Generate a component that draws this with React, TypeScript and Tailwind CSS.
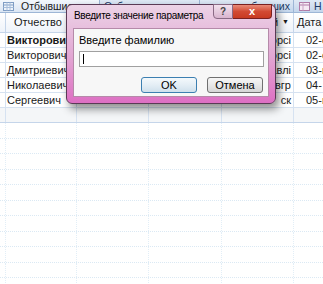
import React from "react";

const cols = ["w-[72px]", "w-[72px]", "w-[73px]", "w-[72px]", "w-[29px]"];

const rows = [
  { name: "Викторович", c4: "орсі", date: "02-о", bold: true },
  { name: "Викторович", c4: "орсі", date: "02-о", bold: false },
  { name: "Дмитриевич", c4: "авлі", date: "03-м", bold: false },
  { name: "Николаевич", c4: "вгр", date: "04-", bold: false },
  { name: "Сергеевич", c4: "ск", date: "05-м", bold: false },
];

const TabIcon = () => (
  <svg width="11" height="9" viewBox="0 0 11 9" className="shrink-0">
    <rect x="0.5" y="0.5" width="10" height="8" fill="#eef4fb" stroke="#7f9dc4" />
    <line x1="0.5" y1="3" x2="10.5" y2="3" stroke="#7f9dc4" />
    <line x1="0.5" y1="5.5" x2="10.5" y2="5.5" stroke="#a8bedb" />
    <line x1="4" y1="0.5" x2="4" y2="8.5" stroke="#a8bedb" />
    <line x1="7" y1="0.5" x2="7" y2="8.5" stroke="#a8bedb" />
  </svg>
);

const TabIconPink = () => (
  <svg width="11" height="9" viewBox="0 0 11 9" className="shrink-0">
    <rect x="0.5" y="0.5" width="10" height="8" fill="#f6eaf4" stroke="#b07ca8" />
    <line x1="0.5" y1="3" x2="10.5" y2="3" stroke="#b07ca8" />
    <line x1="4" y1="0.5" x2="4" y2="8.5" stroke="#c9a4c4" />
  </svg>
);

export default function App() {
  return (
    <div className="relative w-[323px] h-[284px] overflow-hidden bg-white text-[11px] text-[#1a1a1a] font-['Liberation_Sans',Arial,sans-serif]">
      {/* document tabs */}
      <div className="flex h-[13px] overflow-hidden bg-gradient-to-b from-[#dfe9f5] to-[#c4d6ec] border-b border-[#9db6d6]">
        <div className="flex shrink-0 items-center gap-[7px] pl-[3px] w-[100px] overflow-hidden bg-gradient-to-b from-[#f3f7fc] to-[#dbe6f4] border-r border-[#9db6d6]">
          <TabIcon />
          <span className="text-[10.5px] leading-none whitespace-nowrap">Отбывшие сро</span>
        </div>
        <div className="flex shrink-0 items-center pl-[4px] w-[100px] overflow-hidden border-r border-[#9db6d6]">
          <span className="text-[10.5px] leading-none whitespace-nowrap text-[#1c3a66]">Отбывшие срок</span>
        </div>
        <div className="flex shrink-0 items-center justify-end pr-[3px] w-[94px] overflow-hidden border-r border-[#9db6d6]">
          <span className="text-[10.5px] leading-none whitespace-nowrap text-[#1c3a66]">отбывших</span>
        </div>
        <div className="flex shrink-0 items-center gap-[4px] pl-[5px]">
          <TabIconPink />
          <span className="text-[10.5px] leading-none text-[#1c3a66]">Н</span>
        </div>
      </div>

      {/* header row */}
      <div className="flex h-[20px] pl-[5px] bg-gradient-to-b from-[#ffffff] to-[#eef3fa] border-b border-[#c5d5ea]">
        <div className={`${cols[0]} shrink-0 border-l border-r border-[#c5d5ea] flex items-center pl-[8px] whitespace-nowrap`}>Отчество</div>
        <div className={`${cols[1]} shrink-0 border-r border-[#c5d5ea]`} />
        <div className={`${cols[2]} shrink-0 border-r border-[#c5d5ea]`} />
        <div className={`${cols[3]} shrink-0 border-r border-[#c5d5ea] flex items-center justify-end pr-[4px] gap-[4px]`}>
          <span>й</span>
          <span className="text-[7px]">▼</span>
        </div>
        <div className={`${cols[4]} shrink-0 flex items-center pl-[3px] whitespace-nowrap overflow-hidden`}>Дата</div>
      </div>

      {/* data rows */}
      {rows.map((r, i) => (
        <div key={i} className="flex h-[15px] pl-[5px] border-b border-[#d6e2f1] leading-[14px]">
          <div className={`${cols[0]} shrink-0 border-l border-r border-[#d6e2f1] pl-[1px] whitespace-nowrap overflow-hidden ${r.bold ? "font-bold" : ""}`}>{r.name}</div>
          <div className={`${cols[1]} shrink-0 border-r border-[#d6e2f1]`} />
          <div className={`${cols[2]} shrink-0 border-r border-[#d6e2f1]`} />
          <div className={`${cols[3]} shrink-0 border-r border-[#d6e2f1] text-right pr-[2px] whitespace-nowrap overflow-hidden`}>{r.c4}</div>
          <div className={`${cols[4]} shrink-0 pl-[12px] whitespace-nowrap overflow-hidden`}>{r.date}</div>
        </div>
      ))}

      {/* new record row */}
      <div className="flex h-[15px] pl-[5px] border-b border-[#c5d5ea] bg-[#f4f6f8]">
        <div className={`${cols[0]} shrink-0 border-l border-r border-[#d6e2f1]`} />
        <div className={`${cols[1]} shrink-0 border-r border-[#d6e2f1]`} />
        <div className={`${cols[2]} shrink-0 border-r border-[#d6e2f1]`} />
        <div className={`${cols[3]} shrink-0 border-r border-[#d6e2f1]`} />
        <div className={cols[4]} />
      </div>

      {/* empty area with dotted guides */}
      {Array.from({ length: 11 }).map((_, i) => (
        <div key={i} className="flex h-[15.5px] pl-[5px] border-b border-dotted border-[#dbe9f4]">
          <div className={`${cols[0]} shrink-0 border-l border-r border-dotted border-[#e2eef7]`} />
          <div className={`${cols[1]} shrink-0 border-r border-dotted border-[#e2eef7]`} />
          <div className={`${cols[2]} shrink-0 border-r border-dotted border-[#e2eef7]`} />
          <div className={`${cols[3]} shrink-0 border-r border-dotted border-[#e2eef7]`} />
          <div className={cols[4]} />
        </div>
      ))}

      {/* parameter dialog */}
      <div className="absolute left-[66px] top-[4px] w-[210px] h-[100px] rounded-[6px] border border-[#5a3a55] bg-gradient-to-b from-[#ecd3e6] via-[#e2a9d4] to-[#dd6fc3] shadow-[3px_5px_8px_rgba(0,0,0,0.45)] flex flex-col">
        <div className="h-[23px] flex items-start justify-between pl-[7px] pr-[3px]">
          <span className="mt-[6px] text-[10px] tracking-[-0.3px] leading-none text-black whitespace-nowrap">Введите значение параметра</span>
          <div className="flex -mt-px shrink-0">
            <div className="w-[20px] h-[15px] rounded-bl-[4px] border border-[#8a6a85] bg-gradient-to-b from-[#f2e2ee] to-[#d9b4cf] flex items-center justify-center text-[10px] font-bold text-[#444]">?</div>
            <div className="w-[39px] h-[15px] rounded-br-[4px] border border-l-0 border-[#7a2020] bg-gradient-to-b from-[#e88a78] via-[#d24a33] to-[#c83a22] flex items-center justify-center text-[11px] font-bold text-white">x</div>
          </div>
        </div>
        <div className="mx-[6px] mb-[6px] flex-1 border border-[#b58aa9] bg-[#f7f7f7] flex flex-col pl-[5px] pr-[4px]">
          <span className="mt-[6px] text-[11px] leading-none text-black">Введите фамилию</span>
          <div className="mt-[5px] h-[16px] border border-[#a0a0a0] bg-white flex items-center pl-[3px]">
            <div className="w-px h-[10px] bg-black" />
          </div>
          <div className="mt-[10px] flex justify-end gap-[10px] pr-[1px]">
            <div className="w-[56px] h-[16px] rounded-[3px] border border-[#3c7fb1] bg-gradient-to-b from-[#f4f9fc] via-[#e4eef5] to-[#cfe0ec] flex items-center justify-center text-[11px] text-black">OK</div>
            <div className="w-[56px] h-[16px] rounded-[3px] border border-[#707070] bg-gradient-to-b from-[#f6f6f6] via-[#e8e8e8] to-[#d6d6d6] flex items-center justify-center text-[11px] text-black">Отмена</div>
          </div>
        </div>
      </div>
    </div>
  );
}
